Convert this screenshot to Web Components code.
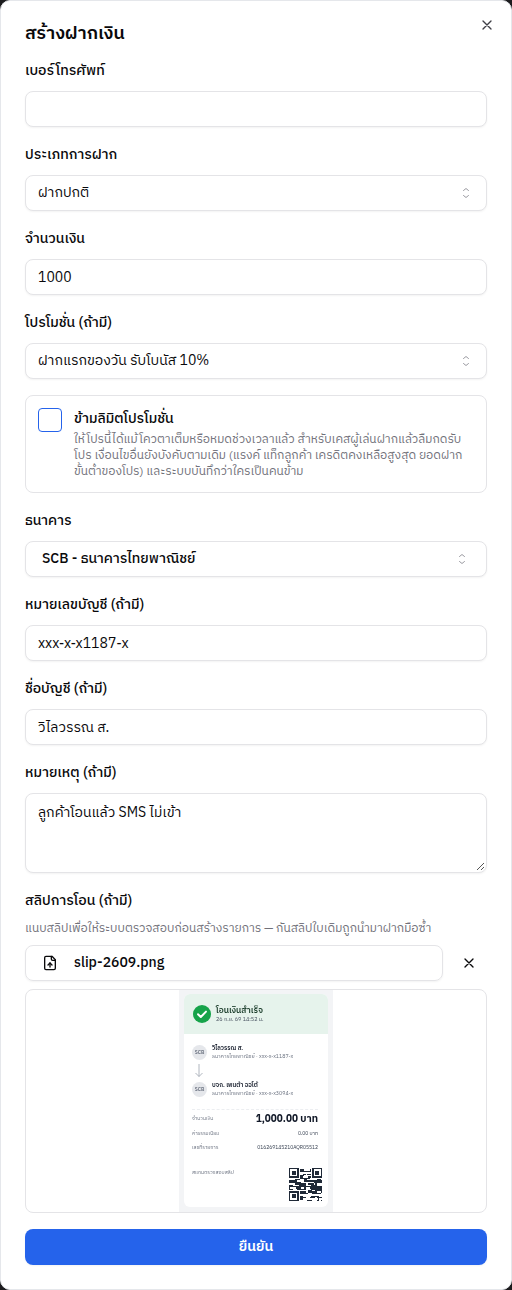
<!DOCTYPE html>
<html lang="th">
<head>
<meta charset="utf-8">
<title>สร้างฝากเงิน</title>
<style>
  html, body { margin: 0; background: #1c1c1e; }
  body { font-family: "IBM Plex Sans Thai", Inter, "Noto Sans", sans-serif; color: #09090b; }
</style>
</head>
<body>
<deposit-dialog heading="สร้างฝากเงิน">
  <form-field label="เบอร์โทรศัพท์"><text-box></text-box></form-field>
  <form-field label="ประเภทการฝาก"><select-box>ฝากปกติ</select-box></form-field>
  <form-field label="จำนวนเงิน"><text-box>1000</text-box></form-field>
  <form-field label="โปรโมชั่น (ถ้ามี)"><select-box>ฝากแรกของวัน รับโบนัส 10%</select-box></form-field>
  <check-card heading="ข้ามลิมิตโปรโมชั่น">ให้โปรนี้ได้แม้โควตาเต็มหรือหมดช่วงเวลาแล้ว สำหรับเคสผู้เล่นฝากแล้วลืมกดรับโปร เงื่อนไขอื่นยังบังคับตามเดิม (แรงค์ แท็กลูกค้า เครดิตคงเหลือสูงสุด ยอดฝากขั้นต่ำของโปร) และระบบบันทึกว่าใครเป็นคนข้าม</check-card>
  <form-field label="ธนาคาร"><select-box strong>SCB - ธนาคารไทยพาณิชย์</select-box></form-field>
  <form-field label="หมายเลขบัญชี (ถ้ามี)"><text-box>xxx-x-x1187-x</text-box></form-field>
  <form-field label="ชื่อบัญชี (ถ้ามี)"><text-box>วิไลวรรณ ส.</text-box></form-field>
  <form-field label="หมายเหตุ (ถ้ามี)"><text-box multiline>ลูกค้าโอนแล้ว SMS ไม่เข้า</text-box></form-field>
  <form-field label="สลิปการโอน (ถ้ามี)" hint="แนบสลิปเพื่อให้ระบบตรวจสอบก่อนสร้างรายการ — กันสลิปใบเดิมถูกนำมาฝากมือซ้ำ">
    <slip-upload name="slip-2609.png"></slip-upload>
  </form-field>
  <confirm-button>ยืนยัน</confirm-button>
</deposit-dialog>

<script>
function define(name, html, extra) {
  const tpl = document.createElement('template')
  tpl.innerHTML = html
  customElements.define(name, class extends HTMLElement {
    constructor() {
      super()
      this.attachShadow({ mode: 'open' }).appendChild(tpl.content.cloneNode(true))
    }
    connectedCallback() {
      if (extra) extra(this, this.shadowRoot)
    }
  })
}

define('deposit-dialog', `
  <style>
    :host { display: flex; flex-direction: column; gap: 16px; position: relative; box-sizing: border-box;
      width: 512px; height: 1290px; padding: 23px 24px 24px; background: #fff;
      border: 1px solid #e5e7eb; border-radius: 10px; }
    h2 { margin: 0; padding-top: 1px; font-size: 18px; line-height: 18px; font-weight: 600; }
    button { position: absolute; top: 16px; right: 16px; width: 16px; height: 16px; padding: 0; border: 0; background: none; color: #3f3f46; }
    svg { display: block; }
  </style>
  <h2></h2>
  <button aria-label="ปิด"><svg width="16" height="16" viewBox="0 0 24 24" fill="none" stroke="currentColor" stroke-width="2" stroke-linecap="round"><path d="M18 6 6 18M6 6l12 12"/></svg></button>
  <slot></slot>
`, (el, root) => { root.querySelector('h2').textContent = el.getAttribute('heading') })

define('form-field', `
  <style>
    :host { display: flex; flex-direction: column; }
    label { padding-top: 2px; font-size: 14px; line-height: 20px; font-weight: 500; margin-bottom: 10px; }
    p { margin: 0 0 8px; font-size: 12px; line-height: 16px; color: #71717a; }
    p:empty { display: none; }
  </style>
  <label></label>
  <p></p>
  <slot></slot>
`, (el, root) => {
  root.querySelector('label').textContent = el.getAttribute('label')
  root.querySelector('p').textContent = el.getAttribute('hint') || ''
})

define('text-box', `
  <style>
    :host { display: flex; align-items: center; box-sizing: border-box; height: 36px; padding: 2px 12px 0;
      font-size: 14px; line-height: 20px; background: #fff; border: 1px solid #e4e4e7; border-radius: 8px;
      box-shadow: 0 1px 2px rgba(0,0,0,.05); position: relative; }
    :host([multiline]) { height: 80px; align-items: flex-start; padding-top: 9px; }
    svg { display: none; position: absolute; right: 1px; bottom: 1px; }
    :host([multiline]) svg { display: block; }
  </style>
  <slot></slot>
  <svg width="9" height="9" viewBox="0 0 9 9" fill="none" stroke="#555" stroke-width="1"><path d="M1 8 8 1M5 8l3-3"/></svg>
`)

define('select-box', `
  <style>
    :host { display: flex; align-items: center; justify-content: space-between; box-sizing: border-box; height: 36px;
      padding: 0 14px 0 12px; font-size: 14px; line-height: 20px; background: #fff; border: 1px solid #e4e4e7; border-radius: 8px;
      box-shadow: 0 1px 2px rgba(0,0,0,.05); }
    :host([strong]) { padding: 0 18px 0 16px; font-weight: 500; }
    svg { display: block; color: #71717a; opacity: .7; }
  </style>
  <slot></slot>
  <svg width="12" height="16" viewBox="0 0 12 16" fill="none" stroke="currentColor" stroke-width="1" stroke-linecap="round" stroke-linejoin="round"><path d="M3.5 10.5 6 12.5l2.500-2M3.500 5.500 6 3.500l2.500 2"/></svg>
`)

define('check-card', `
  <style>
    :host { display: flex; gap: 12px; box-sizing: border-box; height: 98px; padding: 12px; border: 1px solid #e4e4e7; border-radius: 8px; }
    .box { flex: none; box-sizing: border-box; width: 24px; height: 24px; border: 1px solid #2563eb; border-radius: 4px; }
    .title { padding-top: 1px; font-size: 14px; line-height: 20px; font-weight: 500; margin-bottom: 3px; }
    .body { font-size: 12px; line-height: 16px; color: #71717a; }
  </style>
  <div class="box"></div>
  <div><div class="title"></div><div class="body"><slot></slot></div></div>
`, (el, root) => { root.querySelector('.title').textContent = el.getAttribute('heading') })

define('slip-upload', `
  <style>
    :host { display: flex; flex-direction: column; gap: 8px; }
    .row { display: flex; align-items: center; gap: 8px; }
    .file { flex: 1; display: flex; align-items: center; gap: 16px; box-sizing: border-box; height: 36px; padding: 0 16px;
      font-size: 14px; font-weight: 500; border: 1px solid #e4e4e7; border-radius: 8px; box-shadow: 0 1px 2px rgba(0,0,0,.05); }
    .file span { margin-top: -2px; }
    .x { flex: none; width: 36px; height: 36px; display: flex; align-items: center; justify-content: center; }
    svg { display: block; }
    .preview { display: flex; justify-content: center; box-sizing: border-box; height: 224px; border: 1px solid #e4e4e7; border-radius: 8px; overflow: hidden; }
  </style>
  <div class="row">
    <div class="file">
      <svg width="16" height="16" viewBox="0 0 24 24" fill="none" stroke="currentColor" stroke-width="2" stroke-linecap="round" stroke-linejoin="round"><path d="M15 2H6a2 2 0 0 0-2 2v16a2 2 0 0 0 2 2h12a2 2 0 0 0 2-2V7Z"/><path d="M14 2v4a2 2 0 0 0 2 2h4"/><path d="M12 12v6"/><path d="m15 15-3-3-3 3"/></svg>
      <span></span>
    </div>
    <div class="x"><svg width="16" height="16" viewBox="0 0 24 24" fill="none" stroke="#09090b" stroke-width="2" stroke-linecap="round"><path d="M18 6 6 18M6 6l12 12"/></svg></div>
  </div>
  <div class="preview"><slip-receipt></slip-receipt></div>
`, (el, root) => { root.querySelector('span').textContent = el.getAttribute('name') })

// mini receipt inside the preview, it stands for a scaled down picture so it is a bit soft
define('slip-receipt', `
  <style>
    :host { display: block; box-sizing: border-box; width: 154px; height: 222px; padding: 4px 5px 5px; background: #f3f4f6; font-size: 5px; line-height: 6px; color: #374151; }
    .paper { height: 213px; background: #fff; border-radius: 6px; overflow: hidden; filter: blur(.25px); }
    .head { display: flex; align-items: center; gap: 5px; height: 40px; padding: 0 9px; background: #e6f3ec; }
    .ok { display: block; flex: none; }
    .head b { display: block; font-size: 8.4px; line-height: 11px; font-weight: 600; color: #1b3d2b; }
    .head span { display: block; font-size: 5.5px; line-height: 7px; color: #4b5563; }
    .main { padding: 10px 6px 0 8px; }
    .party { display: flex; align-items: center; gap: 5px; height: 16px; }
    .dot { flex: none; width: 15px; height: 15px; border-radius: 50%; background: #e5e7eb; font-size: 5px; line-height: 15px; font-weight: 600; text-align: center; color: #6b7280; }
    .party b { display: block; font-size: 6px; line-height: 9px; font-weight: 600; color: #111827; }
    .party span { display: block; font-size: 5.3px; line-height: 8px; color: #6b7280; }
    .arrow { display: block; margin: 4px 0 4px 3px; }
    .rows { display: flex; flex-direction: column; gap: 1px; margin: 12px 4px 0 0; padding-top: 2px; border-top: 1px dashed #eceef1; }
    .line { display: flex; justify-content: space-between; align-items: center; color: #6b7280; height: 13px; }
    .line b { font-weight: 400; color: #374151; }
    .line.big { height: 14px; }
    .line.big b { font-size: 10px; font-weight: 700; color: #111827; }
    .foot { display: flex; justify-content: space-between; align-items: flex-start; margin-top: 14px; color: #6b7280; }
    .foot span { margin-top: 2px; }
    .qr { display: block; }
  </style>
  <div class="paper">
    <div class="head">
      <svg class="ok" width="18" height="18" viewBox="0 0 18 18"><circle cx="9" cy="9" r="9" fill="#16a34a"/><path d="m5 9.300 2.800 2.700L13 6.600" fill="none" stroke="#fff" stroke-width="2" stroke-linecap="round" stroke-linejoin="round"/></svg>
      <div><b>โอนเงินสำเร็จ</b><span>26 ก.ย. 69 14:52 น.</span></div>
    </div>
    <div class="main">
      <div class="party"><div class="dot">SCB</div><div><b>วิไลวรรณ ส.</b><span>ธนาคารไทยพาณิชย์ · xxx-x-x1187-x</span></div></div>
      <svg class="arrow" width="8" height="13" viewBox="0 0 8 13" fill="none" stroke="#9ca3af" stroke-width=".8"><path d="M4 0v12.500M.5 9 4 12.500 7.500 9"/></svg>
      <div class="party"><div class="dot">SCB</div><div><b>บจก. เพนต้า ออโต้</b><span>ธนาคารไทยพาณิชย์ · xxx-x-x3094-x</span></div></div>
      <div class="rows">
        <div class="line big"><span>จำนวนเงิน</span><b>1,000.00 บาท</b></div>
        <div class="line"><span>ค่าธรรมเนียม</span><b>0.00 บาท</b></div>
        <div class="line"><span>เลขที่รายการ</span><b>016269145210AQR05512</b></div>
      </div>
      <div class="foot"><span>สแกนตรวจสอบสลิป</span><svg class="qr" id="qr" width="33" height="33" viewBox="0 0 24 24" shape-rendering="crispEdges"></svg></div>
    </div>
  </div>
`, (el, root) => {
  // fake qr: three finders plus fixed noise, the noise runs in short horizontal bars
  const qr = root.getElementById('qr')
  const ns = 'http://www.w3.org/2000/svg'
  const rect = (x, y, w, h, fill) => {
    const r = document.createElementNS(ns, 'rect')
    r.setAttribute('x', x); r.setAttribute('y', y); r.setAttribute('width', w); r.setAttribute('height', h)
    r.setAttribute('fill', fill)
    qr.appendChild(r)
  }
  const inFinder = (x, y) => (x < 8 && y < 8) || (x > 15 && y < 8) || (x < 8 && y > 15)
  let seed = 7
  const next = () => (seed = (seed * 137 + 41) % 1024) / 1024
  for (let y = 0; y < 24; y++) {
    let x = 0
    while (x < 24) {
      const len = 1 + Math.floor(next() * 4)
      const on = next() < 0.6
      for (let i = x; i < Math.min(x + len, 24); i++) {
        if (on && !inFinder(i, y)) rect(i, y, 1, 1, '#1f2937')
      }
      x += len
    }
  }
  ;[[0, 0], [17, 0], [0, 17]].forEach(([x, y]) => {
    rect(x, y, 7, 7, '#1f2937'); rect(x + 1, y + 1, 5, 5, '#fff'); rect(x + 2, y + 2, 3, 3, '#1f2937')
  })
})

define('confirm-button', `
  <style>
    :host { display: flex; align-items: center; justify-content: center; box-sizing: border-box; height: 36px; padding-bottom: 2px; border-radius: 8px;
      background: #2563eb; color: #fff; font-size: 14px; font-weight: 600; box-shadow: 0 1px 2px rgba(0,0,0,.05); }
  </style>
  <slot></slot>
`)
</script>
</body>
</html>
